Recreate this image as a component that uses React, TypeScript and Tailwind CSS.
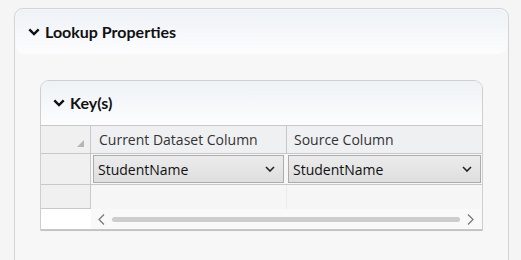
import React from "react";

const Chevron = () => (
  <svg width="12" height="8" viewBox="0 0 12 8">
    <path d="M1.3 1.3 L6 6 L10.7 1.3" fill="none" stroke="#111" strokeWidth="2.4" />
  </svg>
);

const SmallChevron = () => (
  <svg width="10" height="6" viewBox="0 0 10 6">
    <path d="M1 1 L5 5 L9 1" fill="none" stroke="#222" strokeWidth="1.6" />
  </svg>
);

const Dropdown = ({ w }: { w: string }) => (
  <div
    className={`${w} h-[28px] flex items-center justify-between pl-[4px] pr-[8px] border border-[#acacac] bg-gradient-to-b from-[#ececec] to-[#dedede] text-[14px] text-[#111]`}
  >
    <span>StudentName</span>
    <SmallChevron />
  </div>
);

const headFont = { fontFamily: 'Lato, "Open Sans", sans-serif' };

export default function App() {
  return (
    <div
      className="w-[521px] h-[260px] bg-[#f5f5f5] overflow-hidden pt-[8px] pl-[14px] pr-[12px]"
      style={{ fontFamily: '"Open Sans", "Noto Sans", sans-serif' }}
    >
      <div className="h-[300px] rounded-t-[9px] border border-[#d3d3d3] bg-[#f7f7f7] pt-[1px] px-[1px]">
        <div className="h-[44px] rounded-[8px] bg-gradient-to-b from-[#eef2f6] to-[#fdfdfe] flex items-center pl-[12px] gap-[5px]">
          <Chevron />
          <span className="text-[16px] font-bold text-[#111]" style={headFont}>Lookup Properties</span>
        </div>
        <div className="pt-[26px] pl-[24px] pr-[24px]">
          <div className="w-[443px] rounded-t-[9px] border border-[#cfcfcf] bg-[#f7f7f7]">
            <div className="h-[44px] rounded-t-[8px] bg-gradient-to-b from-[#eef2f6] to-[#fdfdfe] flex items-center pl-[12px] gap-[5px]">
              <Chevron />
              <span className="text-[16px] font-bold text-[#111]" style={headFont}>Key(s)</span>
            </div>
            <div className="border-t border-[#c8c8c8]">
              {/* header row */}
              <div className="flex h-[28px] border-b border-[#c8c8c8] bg-[#eff0f2] text-[14px] text-[#333]">
                <div className="w-[50px] border-r border-[#c8c8c8] bg-[#f0f0f0] relative">
                  <svg width="8" height="8" viewBox="0 0 8 8" className="absolute right-[5px] bottom-[5px]">
                    <path d="M7 0 L7 7 L0 7 Z" fill="#b5b5b5" />
                  </svg>
                </div>
                <div className="w-[196px] border-r border-[#c8c8c8] flex items-center pl-[8px]">Current Dataset Column</div>
                <div className="flex-1 flex items-center pl-[7px]">Source Column</div>
              </div>
              {/* row 1 */}
              <div className="flex h-[31px] border-b border-[#c8c8c8]">
                <div className="w-[50px] border-r border-[#c8c8c8] bg-[#f0f0f0]" />
                <div className="w-[196px] flex items-start pt-[1px] pl-[2px]">
                  <Dropdown w="w-[191px]" />
                </div>
                <div className="flex-1 flex items-start pt-[1px] pl-[1px] pr-[1px]">
                  <Dropdown w="flex-1" />
                </div>
              </div>
              {/* row 2 */}
              <div className="flex h-[24px]">
                <div className="w-[50px] border-r border-b border-[#c8c8c8] bg-[#f0f0f0]" />
                <div className="w-[196px] border-r border-[#ececec] bg-[#f6f6f6]" />
                <div className="flex-1 bg-[#f6f6f6]" />
              </div>
              {/* scrollbar row */}
              <div className="flex h-[21px] border-b border-[#c8c8c8] shadow-[0_1px_1px_rgba(0,0,0,0.06)]">
                <div className="w-[50px] bg-white" />
                <div className="flex-1 bg-[#f9f9f9] flex items-center pl-[7px] pr-[8px] gap-[5px]">
                  <svg width="7" height="11" viewBox="0 0 7 11">
                    <path d="M6 0.5 L1 5.5 L6 10.5" fill="none" stroke="#777" strokeWidth="1.2" />
                  </svg>
                  <div className="flex-1 h-[5px] rounded-full bg-[#cdcdcd] mx-[2px]" />
                  <svg width="7" height="11" viewBox="0 0 7 11">
                    <path d="M1 0.5 L6 5.5 L1 10.5" fill="none" stroke="#777" strokeWidth="1.2" />
                  </svg>
                </div>
              </div>
            </div>
          </div>
        </div>
      </div>
    </div>
  );
}
